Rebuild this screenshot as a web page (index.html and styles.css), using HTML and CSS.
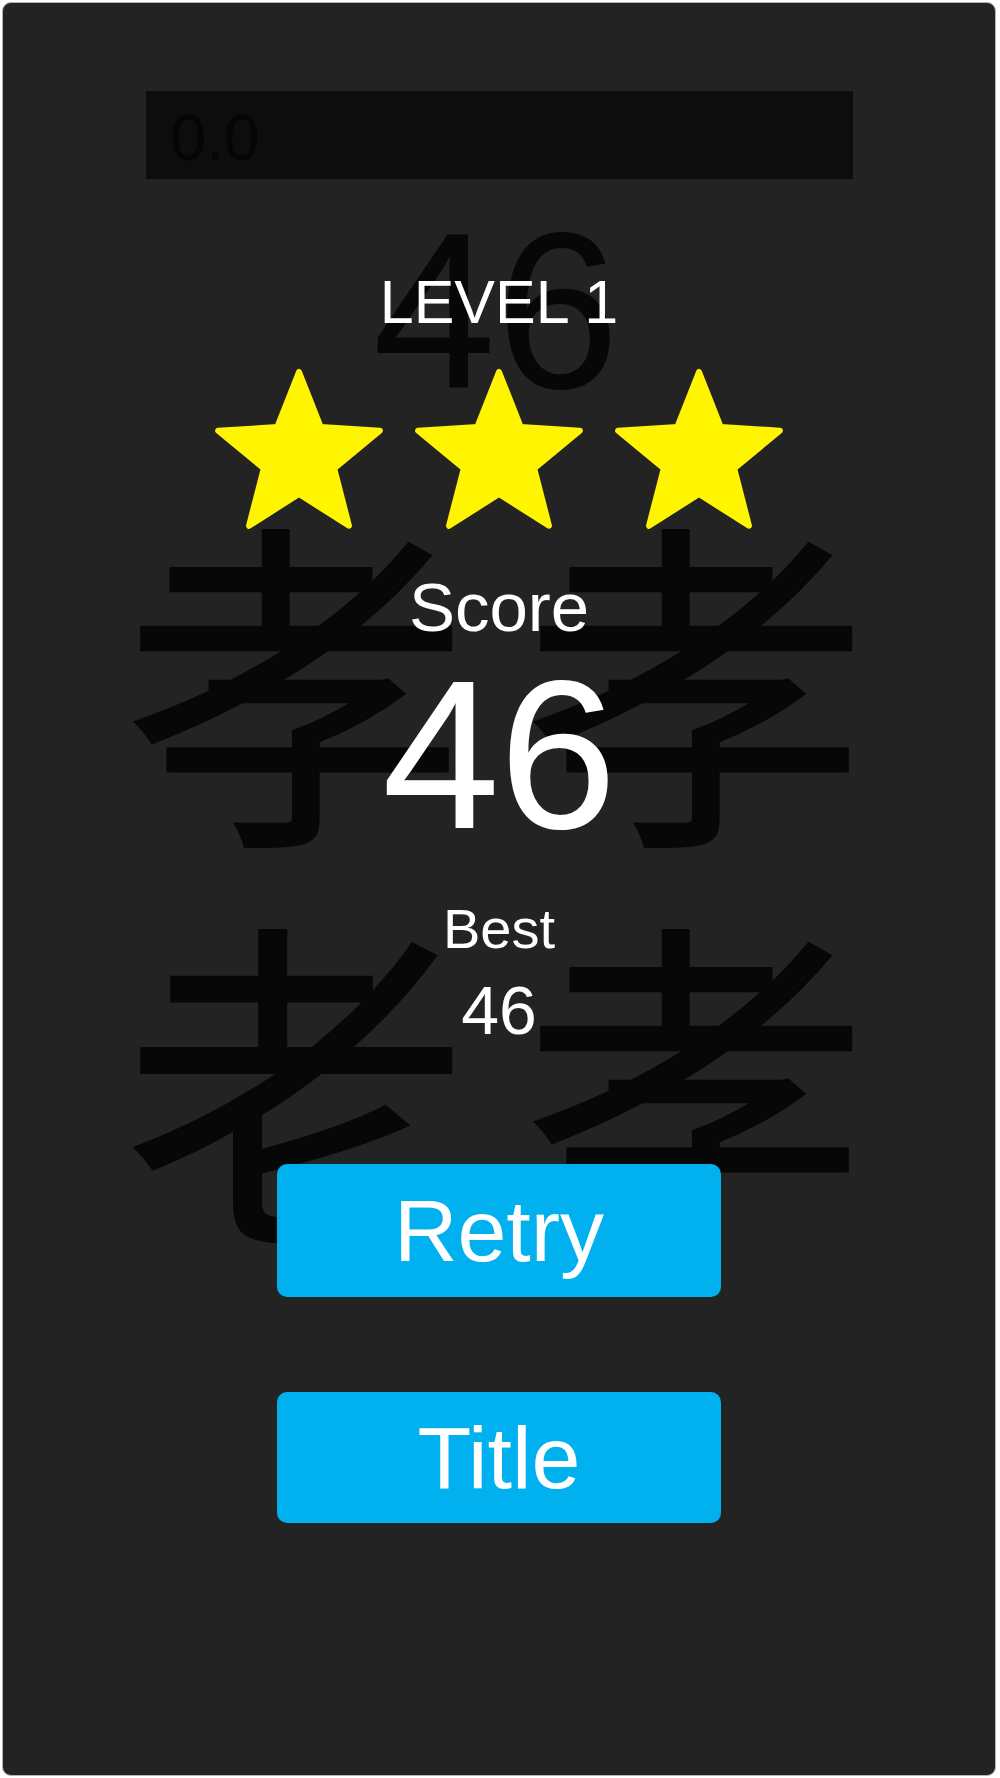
FILE: index.html
```html
<!DOCTYPE html>
<html lang="en">
<head>
<meta charset="utf-8">
<title>Result</title>
<link rel="stylesheet" href="styles.css">
</head>
<body>
<div class="card">
  <div class="bg-number">46</div>
  <div class="bg-chars">
    <span class="bg-char">孝</span>
    <span class="bg-char">孝</span>
    <span class="bg-char">老</span>
    <span class="bg-char">孝</span>
  </div>

  <div class="content">
    <div class="timer"><span class="timer-text">0.0</span></div>
    <div class="level">LEVEL 1</div>
    <svg class="stars" width="568" height="160" viewBox="0 0 568 160" aria-label="3 stars">
      <defs>
        <polygon id="star" points="0,-85 21.75,-29.93 80.84,-26.27 35.19,11.43 49.96,68.77 0,37 -49.96,68.77 -35.19,11.43 -80.84,-26.27 -21.75,-29.93"/>
      </defs>
      <use href="#star" class="star" transform="translate(84,88)"/>
      <use href="#star" class="star" transform="translate(284,88)"/>
      <use href="#star" class="star" transform="translate(484,88)"/>
    </svg>
    <div class="score-label">Score</div>
    <div class="score-value">46</div>
    <div class="best-label">Best</div>
    <div class="best-value">46</div>
    <div class="btn btn-retry">Retry</div>
    <div class="btn btn-title">Title</div>
  </div>
</div>
</body>
</html>
```

FILE: styles.css
```css
html, body {
  margin: 0;
  padding: 0;
  background: #ffffff;
}

body {
  padding: 2px 4px 2px 2px;
  font-family: "Liberation Sans", Arial, sans-serif;
}

.card {
  position: relative;
  box-sizing: border-box;
  width: 994px;
  height: 1774px;
  background: #232323;
  border: 1px solid #b4b4b4;
  border-radius: 9px;
  overflow: hidden;
}

/* background decorations (behind content) */
.bg-number {
  position: absolute;
  left: 0;
  right: 6px;
  top: 197px;
  text-align: center;
  font-size: 222px;
  line-height: 1;
  color: #070707;
  z-index: 0;
}

.bg-chars {
  position: absolute;
  left: 93px;
  top: 467px;
  width: 800px;
  display: grid;
  grid-template-columns: 400px 400px;
  grid-auto-rows: 400px;
  z-index: 0;
}

.bg-char {
  font-family: "Noto Sans CJK SC", "Noto Sans CJK JP", sans-serif;
  font-size: 345px;
  font-weight: 400;
  line-height: 400px;
  text-align: center;
  color: #070707;
  -webkit-text-stroke: 2.5px #070707;
}

.content {
  position: relative;
  z-index: 1;
  display: flex;
  flex-direction: column;
  align-items: center;
  color: #ffffff;
}

.timer {
  margin-top: 88px;
  width: 707px;
  height: 88px;
  background: #0d0d0d;
  display: flex;
  align-items: center;
  box-sizing: border-box;
  padding-left: 25px;
}

.timer-text {
  font-size: 64px;
  line-height: 1;
  color: #050505;
  margin-top: 6px;
}

.level {
  margin-top: 93px;
  font-size: 61px;
  line-height: 1;
}

.stars {
  display: block;
  margin-top: 36px;
}

.star {
  fill: #fff500;
  stroke: #fff500;
  stroke-width: 6;
  stroke-linejoin: round;
}

.score-label {
  margin-top: 44px;
  font-size: 69px;
  line-height: 1;
}

.score-value {
  margin-top: 7px;
  font-size: 212px;
  line-height: 1;
  letter-spacing: -1px;
}

.best-label {
  margin-top: 40px;
  font-size: 56px;
  line-height: 1;
}

.best-value {
  margin-top: 19px;
  font-size: 68px;
  line-height: 1;
}

.btn {
  width: 444px;
  background: #00b0ef;
  border-radius: 10px;
  display: flex;
  align-items: center;
  justify-content: center;
  font-size: 88px;
  line-height: 1;
  color: #ffffff;
}

.btn-retry {
  margin-top: 120px;
  height: 133px;
}

.btn-title {
  margin-top: 95px;
  height: 131px;
}
```
